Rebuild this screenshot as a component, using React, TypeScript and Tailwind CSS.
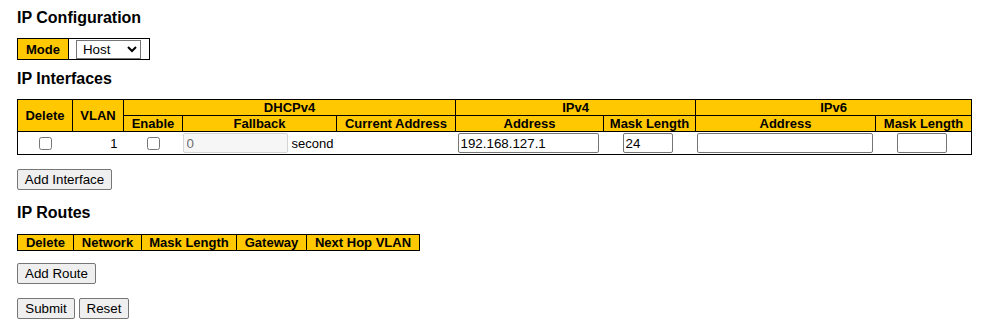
import React from "react";

const Y = "bg-[#ffc800]";
const th = `border border-black ${Y} font-bold text-[13px] leading-[15px] p-0 text-center h-[16px]`;
const thR = `border border-black ${Y} font-bold text-[13px] leading-[15px] p-0 text-center h-[16px] whitespace-nowrap`;
const btn =
  "bg-[#efefef] border border-[#767676] rounded-[2px] px-[6px] text-[13.33px] leading-[15px] h-[21px] text-black";
const inp =
  "border border-[#767676] rounded-[2px] px-[2px] h-[20px] text-[13.33px] leading-[16px] bg-white align-middle";

export default function App() {
  return (
    <div className="font-['Liberation_Sans',Arial,sans-serif] text-[13px] text-black bg-white min-h-screen pl-[17px] pt-[9px] pb-4">
      <h1 className="text-[16px] leading-[18px] font-bold">IP Configuration</h1>

      <table className="mt-[11px] border-collapse border border-black">
        <tbody>
          <tr className="h-[21px]">
            <td className={`${Y} font-bold px-[8px] py-0 border-r border-black leading-[15px]`}>Mode</td>
            <td className="pl-[7px] pr-[8px] py-0">
              <select
                defaultValue="Host"
                className="block w-[65px] h-[19px] border border-[#767676] text-[13.33px] bg-white pl-[2px]"
              >
                <option>Host</option>
                <option>Router</option>
              </select>
            </td>
          </tr>
        </tbody>
      </table>

      <h1 className="mt-[10px] text-[16px] leading-[18px] font-bold">IP Interfaces</h1>

      <table className="mt-[11px] border-collapse border border-black table-fixed w-[954px]">
        <colgroup>
          <col className="w-[55px]" />
          <col className="w-[51px]" />
          <col className="w-[59px]" />
          <col className="w-[154px]" />
          <col className="w-[119px]" />
          <col className="w-[148px]" />
          <col className="w-[92px]" />
          <col className="w-[180px]" />
          <col className="w-[96px]" />
        </colgroup>
        <thead>
          <tr>
            <th rowSpan={2} className={th}>Delete</th>
            <th rowSpan={2} className={th}>VLAN</th>
            <th colSpan={3} className={th}>DHCPv4</th>
            <th colSpan={2} className={th}>IPv4</th>
            <th colSpan={2} className={th}>IPv6</th>
          </tr>
          <tr>
            <th className={th}>Enable</th>
            <th className={th}>Fallback</th>
            <th className={th}>Current Address</th>
            <th className={th}>Address</th>
            <th className={th}>Mask Length</th>
            <th className={th}>Address</th>
            <th className={th}>Mask Length</th>
          </tr>
        </thead>
        <tbody>
          <tr className="h-[23px]">
            <td className="p-0 text-center align-middle">
              <input type="checkbox" className="align-middle" />
            </td>
            <td className="p-0 pr-[6px] text-right align-middle leading-[15px]">1</td>
            <td className="p-0 text-center align-middle">
              <input type="checkbox" className="align-middle" />
            </td>
            <td className="p-0 align-middle whitespace-nowrap">
              <input
                disabled
                defaultValue="0"
                className="border border-[#d4d4d4] rounded-[2px] px-[3px] h-[20px] w-[105px] text-[13.33px] bg-[#f6f6f6] text-[#6d6d6d] align-middle"
              />
              <span className="ml-[4px] align-middle">second</span>
            </td>
            <td className="p-0"></td>
            <td className="p-0 pl-[2px] align-middle">
              <input defaultValue="192.168.127.1" className={`${inp} w-[141px]`} />
            </td>
            <td className="p-0 text-center align-middle">
              <input defaultValue="24" className={`${inp} w-[50px] -ml-[4px]`} />
            </td>
            <td className="p-0 pl-[1px] align-middle">
              <input defaultValue="" className={`${inp} w-[176px]`} />
            </td>
            <td className="p-0 text-center align-middle">
              <input defaultValue="" className={`${inp} w-[50px] -ml-[3px]`} />
            </td>
          </tr>
        </tbody>
      </table>

      <div className="mt-[14px]">
        <button className={`${btn} w-[95px]`}>Add Interface</button>
      </div>

      <h1 className="mt-[14px] text-[16px] leading-[18px] font-bold">IP Routes</h1>

      <table className="mt-[12px] border-collapse border border-black table-fixed w-[402px]">
        <colgroup>
          <col className="w-[56px]" />
          <col className="w-[68px]" />
          <col className="w-[95px]" />
          <col className="w-[70px]" />
          <col className="w-[113px]" />
        </colgroup>
        <thead>
          <tr>
            <th className={thR}>Delete</th>
            <th className={thR}>Network</th>
            <th className={thR}>Mask Length</th>
            <th className={thR}>Gateway</th>
            <th className={thR}>Next Hop VLAN</th>
          </tr>
        </thead>
      </table>

      <div className="mt-[12px]">
        <button className={`${btn} w-[79px] h-[20px]`}>Add Route</button>
      </div>

      <div className="mt-[14px] flex gap-[4px]">
        <button className={`${btn} w-[58px] h-[20px]`}>Submit</button>
        <button className={`${btn} w-[50px] h-[20px]`}>Reset</button>
      </div>
    </div>
  );
}
